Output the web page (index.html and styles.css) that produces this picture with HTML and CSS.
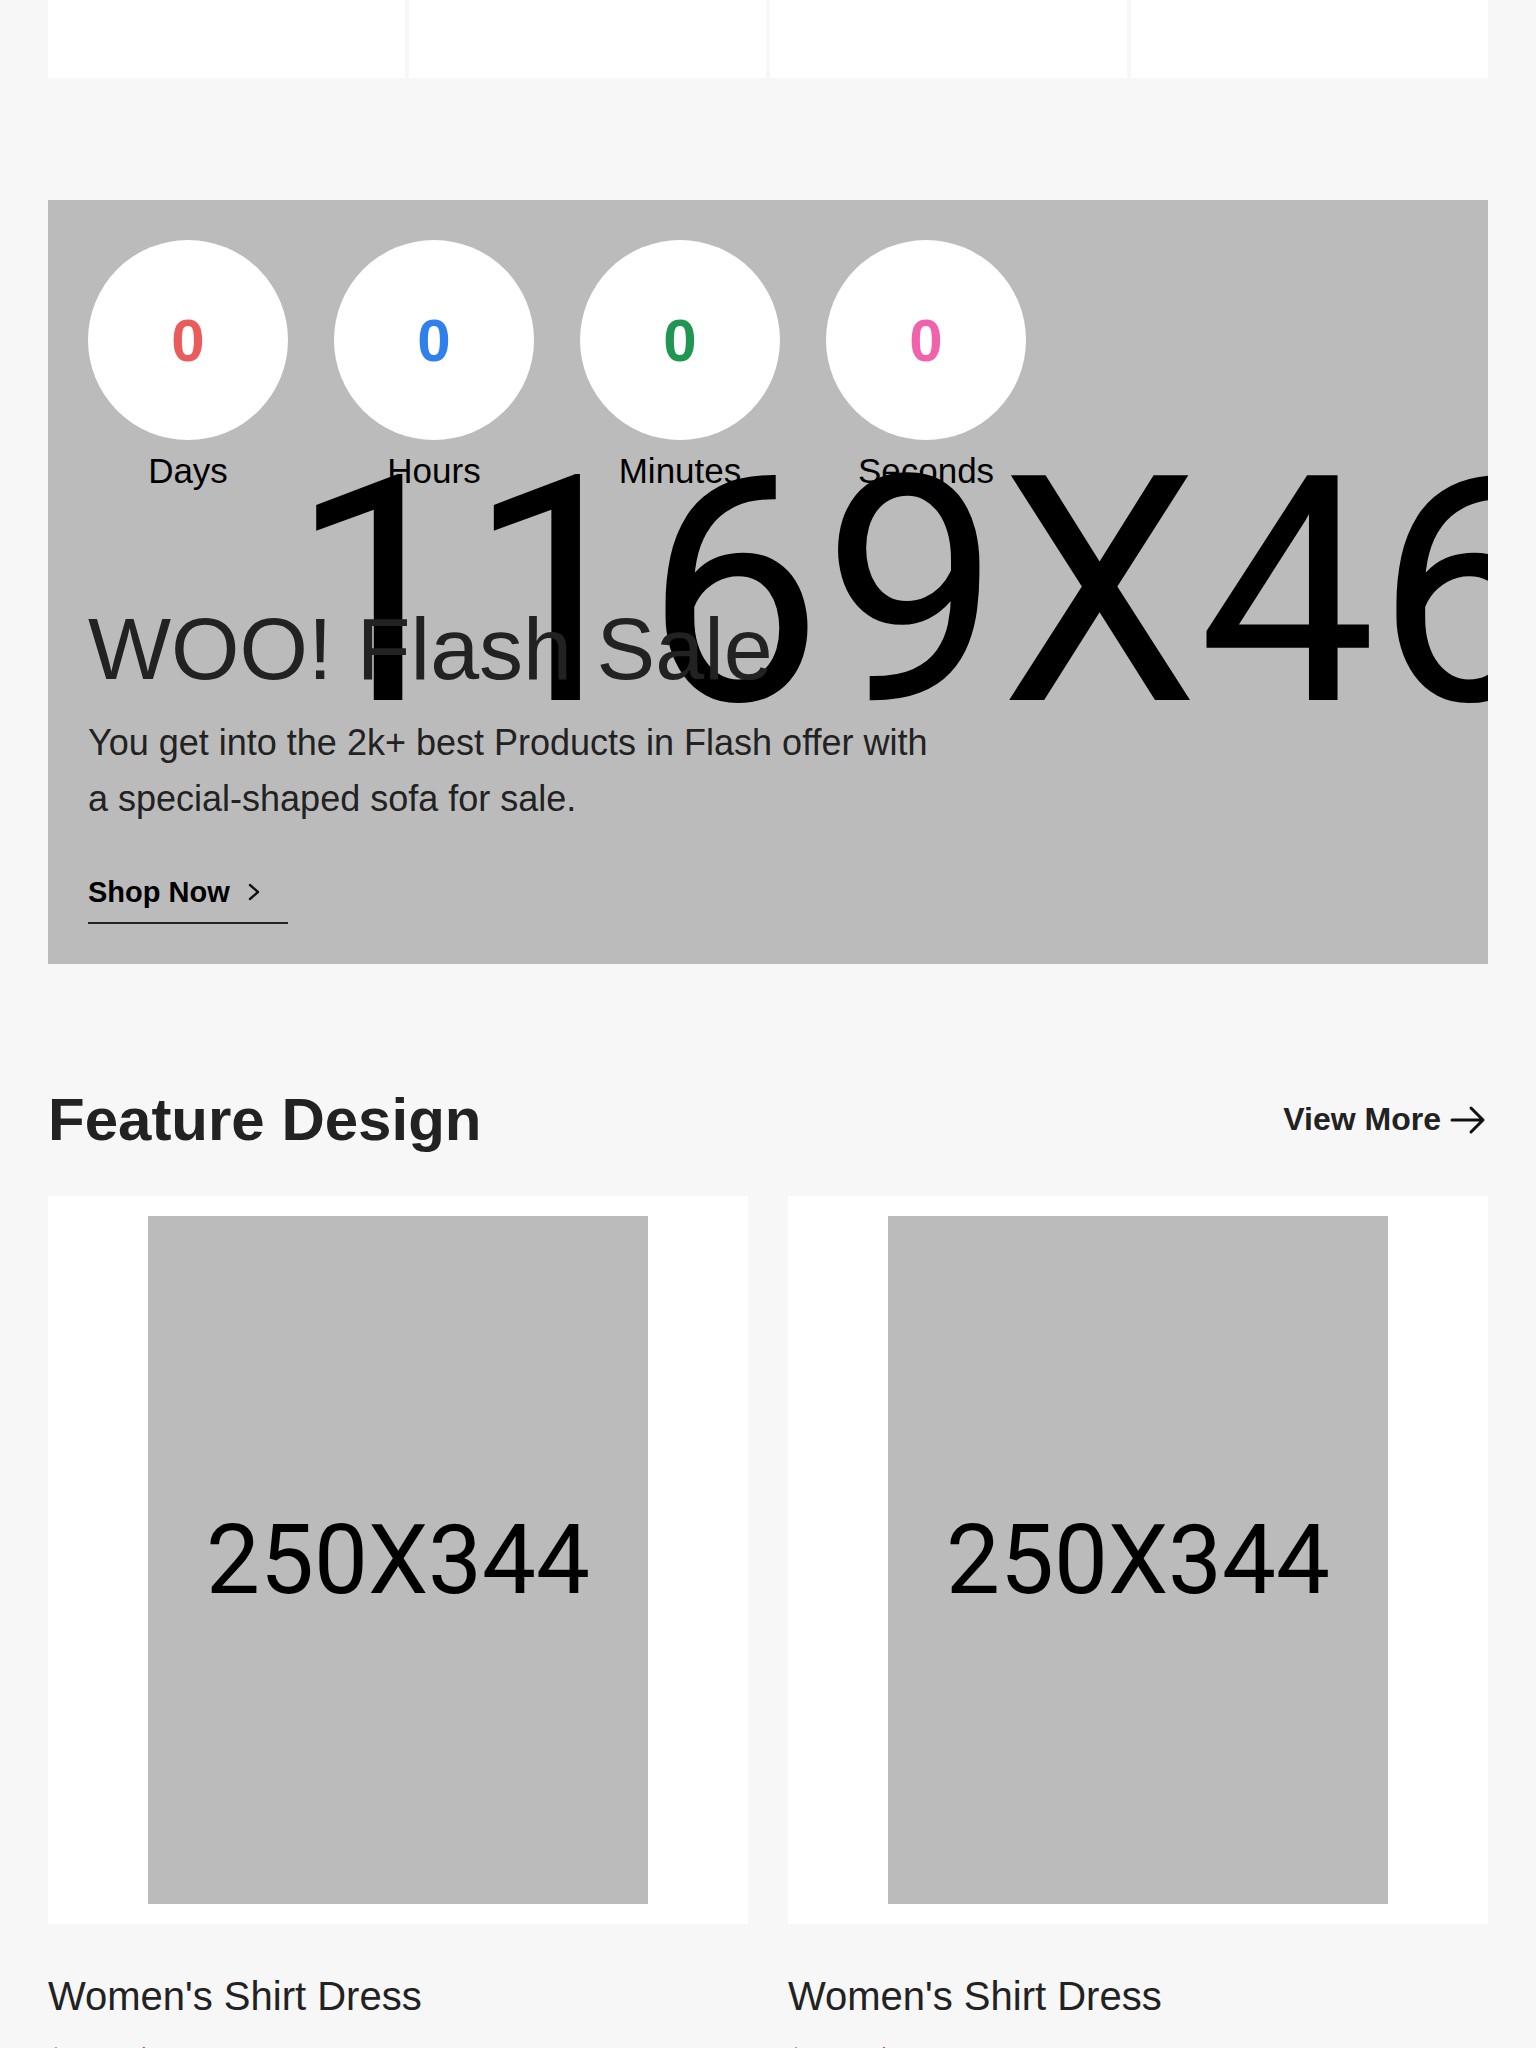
FILE: index.html
```html
<!DOCTYPE html>
<html lang="en">
<head>
<meta charset="utf-8">
<title>Flash Sale</title>
<link rel="stylesheet" href="styles.css">
</head>
<body>
<div class="page">
  <div class="top-grid">
    <div class="top-card"></div>
    <div class="top-card"></div>
    <div class="top-card"></div>
    <div class="top-card"></div>
  </div>

  <section class="flash">
    <div class="flash-bg"><span class="flash-bg-text">1169X464</span></div>
    <div class="flash-content">
      <div class="countdown">
        <div class="cd-item">
          <div class="cd-circle"><span class="cd-num red">0</span></div>
          <div class="cd-label">Days</div>
        </div>
        <div class="cd-item">
          <div class="cd-circle"><span class="cd-num blue">0</span></div>
          <div class="cd-label">Hours</div>
        </div>
        <div class="cd-item">
          <div class="cd-circle"><span class="cd-num green">0</span></div>
          <div class="cd-label">Minutes</div>
        </div>
        <div class="cd-item">
          <div class="cd-circle"><span class="cd-num pink">0</span></div>
          <div class="cd-label">Seconds</div>
        </div>
      </div>
      <h2 class="flash-title">WOO! Flash Sale</h2>
      <p class="flash-text">You get into the 2k+ best Products in Flash offer with a special-shaped sofa for sale.</p>
      <a class="shop-now" href="#">Shop Now
        <svg class="chev" width="12" height="18" viewBox="0 0 12 18"><polyline points="2,2 10,9 2,16" fill="none" stroke="#111" stroke-width="2.4" stroke-linecap="round" stroke-linejoin="round"/></svg>
      </a>
    </div>
  </section>

  <section class="feature">
    <div class="section-head">
      <h2 class="section-title">Feature Design</h2>
      <a class="view-more" href="#">View More
        <svg class="arrow" width="36" height="30" viewBox="0 0 36 30"><path d="M2 15 H33 M21 3 L33 15 L21 27" fill="none" stroke="#111" stroke-width="3" stroke-linecap="round" stroke-linejoin="round"/></svg>
      </a>
    </div>
    <div class="product-grid">
      <div class="product">
        <div class="product-media"><div class="ph">250X344</div></div>
        <h3 class="product-name">Women's Shirt Dress</h3>
        <div class="price"><span class="price-old">$0.00</span><span class="price-new">$0.00</span></div>
      </div>
      <div class="product">
        <div class="product-media"><div class="ph">250X344</div></div>
        <h3 class="product-name">Women's Shirt Dress</h3>
        <div class="price"><span class="price-old">$0.00</span><span class="price-new">$0.00</span></div>
      </div>
    </div>
  </section>
</div>
</body>
</html>
```

FILE: styles.css
```css
* { box-sizing: border-box; }

html, body {
  margin: 0;
  padding: 0;
  background: #f7f7f7;
  font-family: "Liberation Sans", Arial, sans-serif;
  color: #222;
}

.page {
  width: 1440px;
  margin: 0 auto;
}

.top-grid {
  display: grid;
  grid-template-columns: repeat(4, 1fr);
  gap: 4px;
}

.top-card {
  height: 78px;
  background: #fff;
}

/* Flash sale banner */
.flash {
  position: relative;
  margin-top: 122px;
  height: 764px;
  background: #bbbbbb;
  overflow: hidden;
}

.flash-bg {
  position: absolute;
  left: 0;
  top: 10px;
  width: 1925px;
  height: 764px;
  display: flex;
  align-items: center;
  justify-content: center;
}

.flash-bg-text {
  font-family: Roboto, "Liberation Sans", sans-serif;
  font-size: 316px;
  line-height: 1;
  color: #000;
  white-space: nowrap;
}

.flash-content {
  position: relative;
  padding: 40px;
}

.countdown {
  display: flex;
  gap: 46px;
}

.cd-item {
  width: 200px;
  display: flex;
  flex-direction: column;
  align-items: center;
}

.cd-circle {
  width: 200px;
  height: 200px;
  border-radius: 50%;
  background: #fff;
  display: flex;
  align-items: center;
  justify-content: center;
}

.cd-num {
  font-size: 60px;
  font-weight: 700;
}

.red { color: #ec5b5b; }
.blue { color: #2f80ed; }
.green { color: #219653; }
.pink { color: #f062ab; }

.cd-label {
  margin-top: 11px;
  font-size: 35px;
  line-height: 40px;
  color: #000;
}

.flash-title {
  margin: 108px 0 0;
  font-size: 88px;
  line-height: 100px;
  font-weight: 400;
  color: #222;
}

.flash-text {
  margin: 16px 0 0;
  max-width: 858px;
  font-size: 36px;
  line-height: 56px;
  color: #222;
}

.shop-now {
  margin-top: 48px;
  width: 200px;
  display: flex;
  align-items: center;
  gap: 18px;
  padding-bottom: 13px;
  border-bottom: 2px solid #222;
  font-size: 29px;
  line-height: 34px;
  font-weight: 700;
  color: #000;
  text-decoration: none;
}

.chev { display: block; }

/* Feature section */
.feature {
  margin-top: 121px;
}

.section-head {
  display: flex;
  justify-content: space-between;
  align-items: center;
  margin-bottom: 42px;
}

.section-title {
  margin: 0;
  font-size: 60px;
  line-height: 69px;
  font-weight: 700;
  color: #222;
}

.view-more {
  display: flex;
  align-items: center;
  gap: 9px;
  margin-right: 2px;
  font-size: 32px;
  line-height: 37px;
  font-weight: 700;
  color: #222;
  text-decoration: none;
}

.arrow { display: block; }

.product-grid {
  display: grid;
  grid-template-columns: 1fr 1fr;
  gap: 40px;
}

.product-media {
  background: #fff;
  padding: 20px 0;
  display: flex;
  justify-content: center;
}

.ph {
  width: 500px;
  height: 688px;
  background: #bbbbbb;
  display: flex;
  align-items: center;
  justify-content: center;
  font-family: Roboto, "Liberation Sans", sans-serif;
  font-size: 96px;
  color: #000;
}

.product-name {
  margin: 48px 0 0;
  font-size: 40px;
  line-height: 48px;
  font-weight: 400;
  color: #222;
}

.price {
  margin-top: 21px;
  display: flex;
  gap: 18px;
  font-size: 28px;
  line-height: 34px;
}

.price-old { color: #999; }
.price-new { color: #e3262b; }
```
